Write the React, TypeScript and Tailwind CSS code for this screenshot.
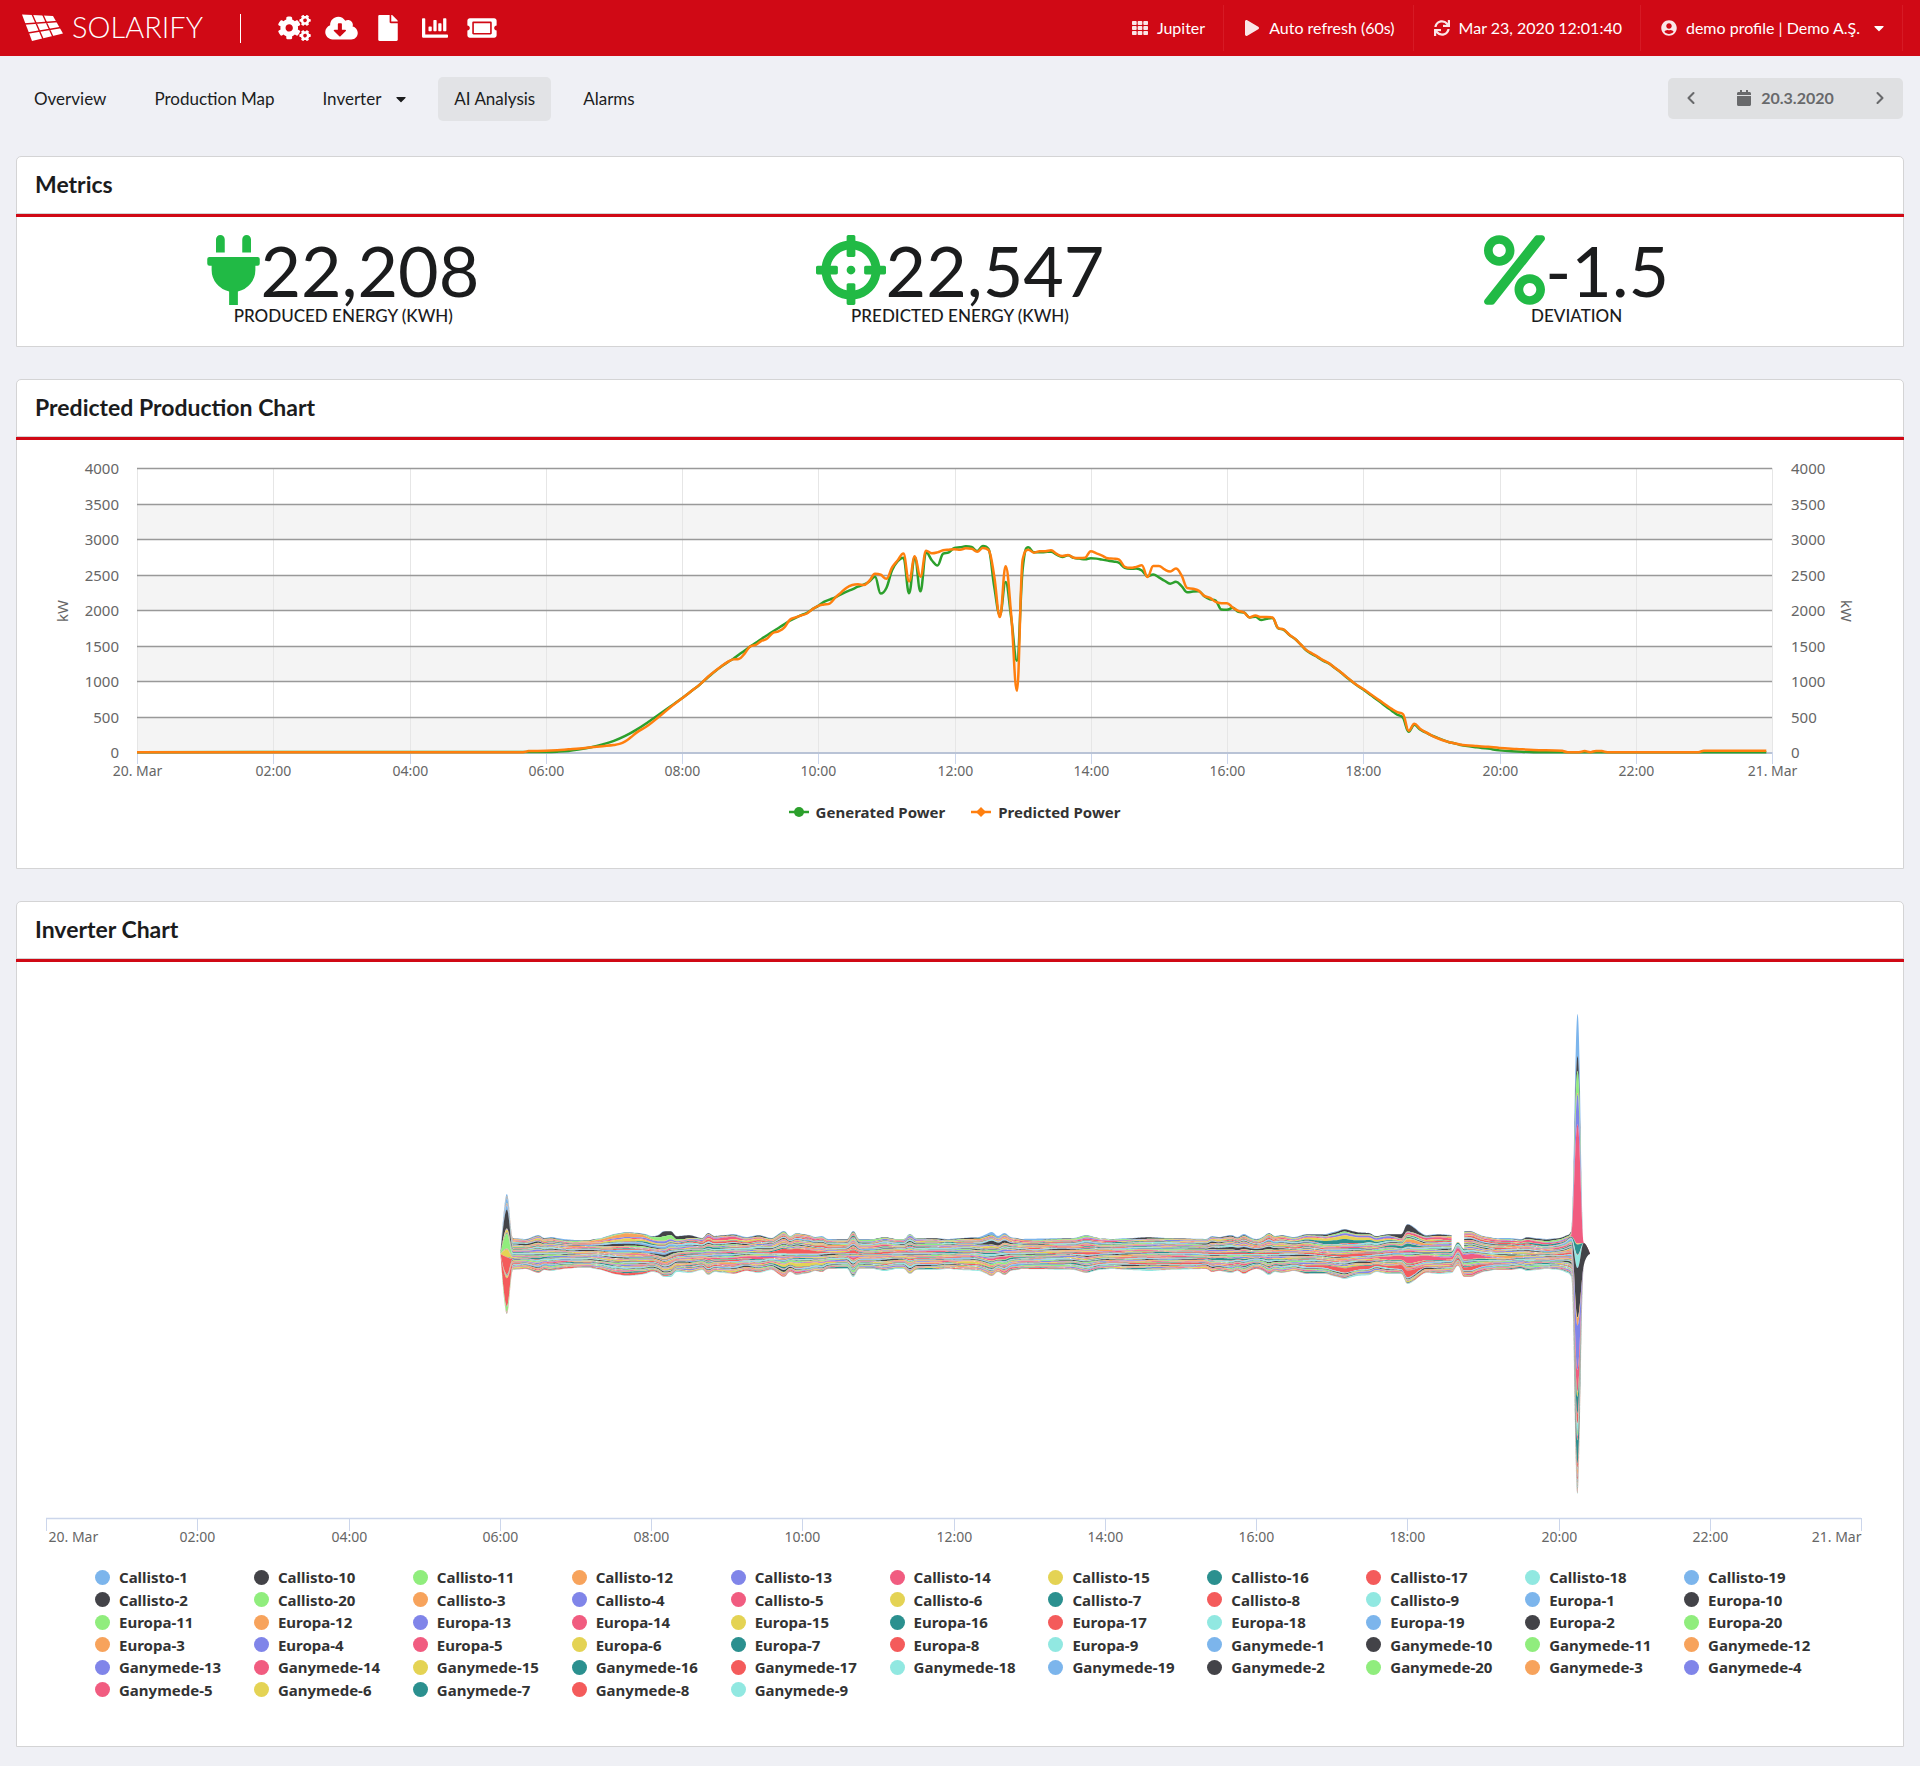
import type { ReactNode } from "react";
import type { IconType } from "react-icons";
import {
  FaCalendar,
  FaCaretDown,
  FaChartBar,
  FaCloudDownloadAlt,
  FaCogs,
  FaCrosshairs,
  FaFile,
  FaPercent,
  FaPlay,
  FaPlug,
  FaSync,
  FaTh,
  FaTicketAlt,
  FaUserCircle,
} from "react-icons/fa";
import { ChevronLeft, ChevronRight } from "lucide-react";

type Point = { x: number; y: number };

const HOUR_LABELS = [
  "20. Mar", "02:00", "04:00", "06:00", "08:00", "10:00", "12:00",
  "14:00", "16:00", "18:00", "20:00", "22:00", "21. Mar",
];

// one sample every five minutes, [sample index, kW]; gaps are interpolated
const GENERATED: [number, number][] = [
  [0, 5], [72, 8], [74, 12], [76, 22], [78, 45], [80, 75], [82, 115], [84, 165], [86, 235], [88, 325], [90, 430], [92, 543], [94, 655],
  [96, 768], [97, 829], [98, 894], [99, 955], [100, 1026], [101, 1096], [102, 1162], [103, 1222], [104, 1279], [105, 1326], [106, 1386], [107, 1443],
  [108, 1504], [109, 1555], [110, 1611], [111, 1663], [112, 1715], [113, 1766], [114, 1818], [115, 1869], [116, 1911], [117, 1949], [118, 1982], [119, 2033],
  [120, 2080], [121, 2136], [122, 2169], [123, 2202], [124, 2244], [125, 2282], [126, 2315], [127, 2352], [128, 2380], [129, 2427], [130, 2493], [131, 2254],
  [132, 2333], [133, 2586], [134, 2713], [135, 2764], [136, 2258], [137, 2774], [138, 2286], [139, 2839], [140, 2727], [141, 2652], [142, 2821], [143, 2839],
  [144, 2900], [145, 2910], [146, 2924], [147, 2914], [148, 2858], [149, 2928], [150, 2886], [151, 2352], [152, 1949], [153, 2418], [154, 1902], [155, 1302],
  [156, 2596], [157, 2910], [158, 2839], [159, 2839], [160, 2844], [161, 2849], [162, 2807], [163, 2774], [164, 2797], [165, 2760], [166, 2750], [167, 2741],
  [168, 2755], [169, 2750], [170, 2736], [171, 2722], [172, 2708], [173, 2689], [174, 2619], [175, 2605], [176, 2610], [177, 2582], [178, 2502], [179, 2525],
  [180, 2483], [181, 2436], [182, 2394], [183, 2422], [184, 2361], [185, 2272], [186, 2282], [187, 2286], [188, 2216], [189, 2174], [190, 2155], [191, 2029],
  [192, 2024], [193, 2052], [194, 1996], [195, 1986], [196, 1916], [197, 1925], [198, 1879], [199, 1897], [200, 1907], [201, 1762], [202, 1740], [203, 1665],
  [204, 1609], [205, 1529], [206, 1446], [207, 1396], [208, 1350], [209, 1299], [210, 1260], [211, 1198], [212, 1138], [213, 1072], [214, 1006], [215, 947],
  [216, 893], [217, 835], [218, 774], [219, 715], [220, 652], [221, 594], [222, 535], [223, 492], [224, 295], [225, 394], [226, 325], [227, 284],
  [228, 242], [229, 211], [230, 178], [231, 150], [232, 131], [233, 111], [234, 94], [236, 73], [238, 55], [240, 30], [243, 15], [246, 5], [287, 5],
];

const PREDICTED: [number, number][] = [
  [0, 5], [68, 5], [69, 20], [72, 24], [74, 32], [76, 45], [78, 58], [80, 74], [82, 90], [84, 106], [85, 122], [86, 158], [87, 215], [88, 282], [90, 383], [92, 510], [94, 646],
  [96, 768], [97, 829], [98, 894], [99, 955], [100, 1030], [101, 1102], [102, 1168], [103, 1228], [104, 1281], [105, 1321], [106, 1326], [107, 1400],
  [108, 1504], [109, 1527], [110, 1583], [111, 1616], [112, 1696], [113, 1719], [114, 1771], [115, 1883], [116, 1916], [117, 1944], [118, 1972], [119, 2033],
  [120, 2080], [121, 2099], [122, 2113], [123, 2197], [124, 2268], [125, 2338], [126, 2375], [127, 2385], [128, 2375], [129, 2436], [130, 2535], [131, 2521],
  [132, 2464], [133, 2624], [134, 2727], [135, 2821], [136, 2427], [137, 2783], [138, 2493], [139, 2863], [140, 2825], [141, 2839], [142, 2868], [143, 2877],
  [144, 2882], [145, 2877], [146, 2896], [147, 2891], [148, 2849], [149, 2900], [150, 2872], [151, 2502], [152, 1921], [153, 2643], [154, 1940], [155, 876],
  [156, 2736], [157, 2877], [158, 2835], [159, 2854], [160, 2854], [161, 2868], [162, 2816], [163, 2788], [164, 2802], [165, 2764], [166, 2760], [167, 2764],
  [168, 2854], [169, 2825], [170, 2793], [171, 2755], [172, 2750], [173, 2736], [174, 2633], [175, 2619], [176, 2633], [177, 2657], [178, 2488], [179, 2647],
  [180, 2647], [181, 2596], [182, 2568], [183, 2610], [184, 2511], [185, 2333], [186, 2324], [187, 2296], [188, 2221], [189, 2193], [190, 2136], [191, 2118],
  [192, 2118], [193, 2057], [194, 2010], [195, 1986], [196, 1916], [197, 1944], [198, 1921], [199, 1921], [200, 1916], [201, 1766], [202, 1745], [203, 1670],
  [204, 1612], [205, 1532], [206, 1452], [207, 1404], [208, 1357], [209, 1306], [210, 1264], [211, 1202], [212, 1142], [213, 1076], [214, 1010], [215, 950],
  [216, 900], [217, 844], [218, 788], [219, 732], [220, 675], [221, 619], [222, 572], [223, 544], [224, 308], [225, 408], [226, 338], [227, 288],
  [228, 244], [229, 206], [230, 174], [231, 150], [232, 131], [233, 114], [234, 103], [236, 91], [238, 80], [240, 65], [243, 50], [246, 36], [251, 26], [252, 5], [254, 5],
  [255, 20], [256, 5], [257, 22], [258, 20], [259, 5], [275, 5], [276, 26], [287, 26],
];

const SERIES_COLORS = [
  "#7cb5ec", "#434348", "#90ed7d", "#f7a35c", "#8085e9",
  "#f15c80", "#e4d354", "#2b908f", "#f45b5b", "#91e8e1",
];

const INVERTERS = ["Callisto", "Europa", "Ganymede"].flatMap((name) =>
  Array.from({ length: 20 }, (_, i) => `${name}-${i + 1}`).sort(),
);

// half height of the whole stream, [sample index, px]
const ENVELOPE: [number, number][] = [
  [72, 0], [73, 60], [74, 16], [76, 15], [78, 19], [79, 16], [80, 17], [82, 15], [84, 14], [86, 14], [88, 16], [90, 20], [92, 22], [94, 21], [95, 20], [96, 18],
  [97, 19], [98, 23], [99, 23], [100, 18], [102, 19], [104, 16], [105, 21], [106, 18], [109, 20], [111, 17], [113, 19], [115, 16], [117, 23], [118, 18], [119, 21],
  [121, 19], [122, 17], [123, 18], [124, 15], [127, 15], [128, 23], [129, 15], [131, 15], [133, 17], [135, 15], [136, 15], [137, 20], [138, 16], [141, 16], [143, 15],
  [145, 16], [148, 17], [150, 22], [151, 18], [152, 21], [153, 17], [155, 15], [163, 16], [165, 19], [167, 16], [169, 15], [172, 16], [175, 17], [178, 16], [184, 15],
  [185, 18], [186, 17], [188, 19], [189, 17], [190, 20], [191, 17], [192, 15], [193, 17], [194, 21], [195, 18], [196, 19], [198, 17], [200, 20], [203, 20], [206, 25],
  [208, 22], [210, 21], [211, 18], [213, 20], [215, 20], [216, 30], [217, 27], [218, 22], [219, 19], [221, 20], [223, 19], [224, 12], [225, 23], [226, 23], [228, 18],
  [230, 16], [232, 16], [234, 15], [235, 17], [238, 15], [240, 16], [241, 18], [242, 23], [243, 240], [244, 11], [245, 0],
];

// [series, centre sample, spread, strength]
const SWELLS: [number, number, number, number][] = [
  [3, 92, 4, 7], [6, 92, 5, 4], [11, 92, 5, 3], [20, 92, 5, 3], [58, 92, 5, 4], [1, 98, 1, 9], [2, 98, 2, 8], [1, 101, 2, 5], [4, 97, 3, 4], [10, 97, 4, 4],
  [21, 98, 2, 4], [5, 108, 4, 4], [8, 106, 5, 3], [28, 118, 3, 9], [35, 112, 3, 4], [28, 122, 2, 4], [46, 120, 4, 6], [51, 117, 2, 3], [28, 128, 1, 4],
  [35, 128, 1, 4], [0, 150, 2, 4], [11, 150, 2, 4], [35, 151, 2, 3], [46, 147, 3, 3], [28, 165, 2, 3], [5, 166, 3, 2], [48, 175, 8, 2], [21, 188, 6, 3],
  [28, 187, 5, 3], [37, 188, 5, 2], [6, 206, 6, 6], [7, 206, 5, 6], [1, 206, 5, 3], [4, 207, 4, 3], [48, 206, 5, 8], [28, 206, 6, 3], [1, 216, 2, 12],
  [17, 216, 2, 5], [13, 217, 2, 6], [35, 217, 4, 12], [48, 216, 2, 12], [5, 220, 5, 4], [35, 226, 3, 7], [48, 226, 2, 5], [1, 238, 4, 3], [5, 236, 5, 3],
  [33, 231, 3, 4], [8, 230, 4, 2], [7, 238, 4, 2],
];

const FIRST_SPIKE: Record<number, number> = { 0: 5, 10: 12, 20: 12, 21: 58, 26: 7, 32: 45, 36: 23, 38: 52, 46: 4, 48: 85, 52: 14 };
const LAST_SPIKE: Record<number, number> = {
  0: 125, 1: 45, 2: 65, 3: 5, 4: 90, 5: 355, 6: 3, 7: 30, 8: 2, 9: 36, 10: 2, 11: 147, 12: 2, 13: 22, 14: 133,
  15: 65, 16: 15, 17: 50, 18: 30, 19: 20, 27: 70, 28: 12, 22: 10, 25: 10, 33: 12, 38: 8,
};

function sampleAt(data: [number, number][], k: number) {
  const next = data.findIndex(([i]) => i >= k);
  const [i1, v1] = data[next];
  if (i1 === k) return v1;
  const [i0, v0] = data[next - 1];
  return v0 + ((v1 - v0) * (k - i0)) / (i1 - i0);
}

// Curve segments whose control points never overshoot a local extreme
function spline(points: Point[]) {
  const n = points.length;
  const left: Point[] = points.map((p) => ({ ...p }));
  const right: Point[] = points.map((p) => ({ ...p }));
  for (let i = 1; i < n - 1; i++) {
    const p = points[i];
    const a = points[i - 1];
    const b = points[i + 1];
    const lx = (1.5 * p.x + a.x) / 2.5;
    const rx = (1.5 * p.x + b.x) / 2.5;
    let ly = (1.5 * p.y + a.y) / 2.5;
    let ry = (1.5 * p.y + b.y) / 2.5;
    const correction = ((ry - ly) * (rx - p.x)) / (rx - lx) + p.y - ry;
    ly += correction;
    ry += correction;
    if (ly > a.y && ly > p.y) {
      ly = Math.max(a.y, p.y);
      ry = 2 * p.y - ly;
    } else if (ly < a.y && ly < p.y) {
      ly = Math.min(a.y, p.y);
      ry = 2 * p.y - ly;
    }
    if (ry > b.y && ry > p.y) {
      ry = Math.max(b.y, p.y);
      ly = 2 * p.y - ry;
    } else if (ry < b.y && ry < p.y) {
      ry = Math.min(b.y, p.y);
      ly = 2 * p.y - ry;
    }
    left[i] = { x: lx, y: ly };
    right[i] = { x: rx, y: ry };
  }
  return points
    .slice(1)
    .map((p, i) => {
      const c = [right[i], left[i + 1], p];
      return "C" + c.map((q) => `${q.x.toFixed(2)} ${q.y.toFixed(2)}`).join(" ");
    })
    .join("");
}

function start(p: Point) {
  return `${p.x.toFixed(2)} ${p.y.toFixed(2)}`;
}

const PLOT_W = 1635;
const PLOT_H = 284;

function powerPath(data: [number, number][]) {
  const points = data.map(([k, v]) => ({ x: (k * PLOT_W) / 288, y: PLOT_H + 0.5 - (v * (PLOT_H - 2)) / 4000 }));
  return "M" + start(points[0]) + spline(points);
}

const STREAM_W = 1815;
const NULL_SAMPLE = 224;
const NULL_SERIES = 25;

function streamWeight(s: number, k: number) {
  if (k === 73) return FIRST_SPIKE[s] ?? 1;
  if (k === 243) return LAST_SPIKE[s] ?? 2;
  if (k >= 244) return s === 11 ? 1 : 0;
  if (k === NULL_SAMPLE && s < NULL_SERIES) return 0;
  const wave = Math.sin(k * 0.17 + s * 2.4) + Math.sin(k * 0.41 + s * 5.3) + Math.sin(k * 0.93 + s * 9.1);
  let w = Math.exp(wave * 0.42);
  for (const [id, centre, spread, strength] of SWELLS) {
    if (id === s) w += strength * Math.exp(-(((k - centre) / spread) ** 2));
  }
  return w;
}

function buildStream() {
  const edges: number[][] = [];
  for (let k = 72; k <= 245; k++) {
    const half = sampleAt(ENVELOPE, k);
    const weights = INVERTERS.map((_, s) => streamWeight(s, k));
    const total = weights.reduce((a, b) => a + b, 0);
    let y = -half;
    edges.push([y, ...weights.map((w) => (y += (w * 2 * half) / total))]);
  }
  const area = (s: number, from: number, to: number) => {
    const top: Point[] = [];
    const bottom: Point[] = [];
    for (let k = from; k <= to; k++) {
      const x = (k * (STREAM_W - 1)) / 288;
      top.push({ x, y: edges[k - 72][s] });
      bottom.unshift({ x, y: edges[k - 72][s + 1] });
    }
    return "M" + start(top[0]) + spline(top) + "L" + start(bottom[0]) + spline(bottom) + "Z";
  };
  return INVERTERS.map((_, s) =>
    s < NULL_SERIES ? area(s, 72, NULL_SAMPLE - 1) + area(s, NULL_SAMPLE + 1, 245) : area(s, 72, 245),
  );
}

const STREAM = buildStream();

function Card({ title, children }: { title: string; children: ReactNode }) {
  return (
    <section className="rounded-t-[5px] border border-[#d4d4d5] bg-white">
      <h2 className="flex h-[57px] items-center border-b border-[#d4d4d5] px-[18px] pb-[2px] text-[23px] font-bold">{title}</h2>
      <div className="-mx-px h-[3px] bg-[#d00915]" />
      {children}
    </section>
  );
}

function Logo() {
  return (
    <a href="#home" className="flex items-center" aria-label="Solarify">
      <svg width="42" height="28" viewBox="0 0 42 28" aria-hidden="true">
        <path d="M0 0.5 31 2 41 19.5 10 27Z" fill="#fff" />
        <path
          d="M10 0 21 25M20.5 0 31 23M2.5 10 36 7.5M6 19 39 13.5"
          stroke="#d00915"
          strokeWidth="1.4"
          fill="none"
        />
      </svg>
      <span className="ml-2 pb-[3px] text-[29px] leading-7 font-light">SOLARIFY</span>
    </a>
  );
}

const TOOLS: { label: string; icon: IconType; size: string }[] = [
  { label: "Settings", icon: FaCogs, size: "h-[26px] w-[33px]" },
  { label: "Downloads", icon: FaCloudDownloadAlt, size: "h-[26px] w-[33px]" },
  { label: "Reports", icon: FaFile, size: "h-[26px] w-5" },
  { label: "Charts", icon: FaChartBar, size: "size-[26px]" },
  { label: "Tickets", icon: FaTicketAlt, size: "h-[26px] w-[30px]" },
];

const STATUS: { label: string; icon: IconType; caret?: boolean }[] = [
  { label: "Jupiter", icon: FaTh },
  { label: "Auto refresh (60s)", icon: FaPlay },
  { label: "Mar 23, 2020 12:01:40", icon: FaSync },
  { label: "demo profile | Demo A.Ş.", icon: FaUserCircle, caret: true },
];

function TopBar() {
  return (
    <header className="flex h-14 items-center bg-[#d00915] pr-[17px] pl-[22px] text-white">
      <Logo />
      <div className="ml-[37px] h-[29px] w-px bg-white" />
      <nav className="ml-[30px] flex items-center">
        {TOOLS.map(({ label, icon: Icon, size }) => (
          <a key={label} href={`#${label.toLowerCase()}`} aria-label={label} className="flex w-[47px] justify-center">
            <Icon className={size} />
          </a>
        ))}
      </nav>
      <div className="ml-auto flex h-[46px]">
        {STATUS.map(({ label, icon: Icon, caret }) => (
          <button key={label} type="button" className="flex items-center border-r border-[#d61a25] px-[18px] text-base">
            <span className="mr-[7px] flex w-5 justify-center">
              <Icon className="size-4 opacity-90" />
            </span>
            {label}
            {caret && <FaCaretDown className="ml-[14px] h-4 w-[10px]" />}
          </button>
        ))}
      </div>
    </header>
  );
}

const TABS = ["Overview", "Production Map", "Inverter", "AI Analysis", "Alarms"];

function SubNav() {
  return (
    <div className="flex justify-between pt-[21px] pr-[17px] pl-[18px]">
      <nav className="flex gap-4">
        {TABS.map((tab) => (
          <a
            key={tab}
            href={`#${tab.toLowerCase().replace(" ", "-")}`}
            className={`flex h-11 items-center rounded-[5px] px-4 text-[17px] ${tab === "AI Analysis" ? "bg-[#e2e3e6]" : ""}`}
          >
            {tab}
            {tab === "Inverter" && <FaCaretDown className="ml-[15px] h-4 w-[10px]" />}
          </a>
        ))}
      </nav>
      <div className="mt-px flex h-[41px] w-[235px] items-center justify-between rounded-[5px] bg-[#dfe0e2] px-[13px] pb-[2px] text-[#68696b]">
        <button type="button" aria-label="Previous day">
          <ChevronLeft size={20} strokeWidth={2.5} />
        </button>
        <button type="button" className="flex items-center gap-[10px] text-base font-bold">
          <FaCalendar className="h-4 w-[14px]" />
          20.3.2020
        </button>
        <button type="button" aria-label="Next day">
          <ChevronRight size={20} strokeWidth={2.5} />
        </button>
      </div>
    </div>
  );
}

const METRICS: { label: string; value: string; icon: IconType; size: string }[] = [
  { label: "PRODUCED ENERGY (KWH)", value: "22,208", icon: FaPlug, size: "h-[70px] w-[53px]" },
  { label: "PREDICTED ENERGY (KWH)", value: "22,547", icon: FaCrosshairs, size: "size-[70px]" },
  { label: "DEVIATION", value: "-1.5", icon: FaPercent, size: "h-[70px] w-[61px]" },
];

function PowerChart() {
  const ticks = [4000, 3500, 3000, 2500, 2000, 1500, 1000, 500, 0];
  const tickY = (v: number) => Math.round(PLOT_H - (v * PLOT_H) / 4000);
  return (
    <svg viewBox="0 0 1886 344" className="block w-full font-['Noto_Sans',sans-serif] text-[14px]" role="img" aria-label="Predicted production">
      <g transform="translate(120 28)">
        {[3500, 2500, 1500, 500].map((v) => (
          <rect key={v} x="0" y={tickY(v)} width={PLOT_W} height="35" fill="#f4f4f4" />
        ))}
        {HOUR_LABELS.map((label, i) => {
          const x = Math.round((i * PLOT_W) / 12) + 0.5;
          return (
            <g key={label}>
              <path d={`M${x} 0V${PLOT_H}`} stroke="#e6e6e6" />
              <path d={`M${x} ${PLOT_H}v12`} stroke="#ccd6eb" />
              <text x={x} y="308" textAnchor="middle" fill="#666">{label}</text>
            </g>
          );
        })}
        {ticks.map((v) => (
          <g key={v} fill="#666" className="text-[15px]">
            {v > 0 && <path d={`M0 ${tickY(v) + 0.5}H${PLOT_W}`} stroke="#999" strokeWidth="1.5" />}
            <text x="-18" y={tickY(v) + 6} textAnchor="end">{v}</text>
            <text x={PLOT_W + 19} y={tickY(v) + 6}>{v}</text>
          </g>
        ))}
        <path d={`M0 ${PLOT_H + 1}H${PLOT_W}`} stroke="#b9c3d6" strokeWidth="2" />
        <g fill="#666" textAnchor="middle" className="text-[15px]">
          <text transform="translate(-69 143) rotate(-90)">kW</text>
          <text transform="translate(1704 143) rotate(90)">kW</text>
        </g>
        <path d={powerPath(GENERATED)} fill="none" stroke="#2ca02c" strokeWidth="2.5" strokeLinejoin="round" />
        <path d={powerPath(PREDICTED)} fill="none" stroke="#ff7f0e" strokeWidth="2.5" strokeLinejoin="round" />
      </g>
    </svg>
  );
}

function PowerLegend() {
  return (
    <div className="flex justify-center gap-[26px] pt-[18px] pr-[11px] pb-[46px] font-['Noto_Sans',sans-serif] text-[15px] leading-5 font-bold text-[#333]">
      <button type="button" className="flex items-center gap-[7px]">
        <svg width="20" height="12" viewBox="0 0 20 12" aria-hidden="true">
          <path d="M0 6H20" stroke="#2ca02c" strokeWidth="2.5" />
          <circle cx="10" cy="6" r="5" fill="#2ca02c" />
        </svg>
        Generated Power
      </button>
      <button type="button" className="flex items-center gap-[7px]">
        <svg width="20" height="12" viewBox="0 0 20 12" aria-hidden="true">
          <path d="M0 6H20" stroke="#ff7f0e" strokeWidth="2.5" />
          <path d="M10 1 15 6 10 11 5 6Z" fill="#ff7f0e" />
        </svg>
        Predicted Power
      </button>
    </div>
  );
}

function InverterChart() {
  return (
    <svg viewBox="0 0 1886 587" className="block w-full font-['Noto_Sans',sans-serif] text-[14px]" role="img" aria-label="Inverter output">
      <g transform="translate(30 292)">
        {STREAM.map((d, s) => (
          <path key={INVERTERS[s]} d={d} fill={SERIES_COLORS[s % 10]} />
        ))}
      </g>
      <g transform="translate(29 556)">
        <path d={`M0 .5H${STREAM_W}`} stroke="#ccd6eb" strokeWidth="1.5" />
        {HOUR_LABELS.map((label, i) => {
          const x = Math.round((i * STREAM_W) / 12) + 0.5;
          const edge = i === 0 ? "start" : i === 12 ? "end" : "middle";
          return (
            <g key={label}>
              <path d={`M${x} 0v13`} stroke="#ccd6eb" />
              <text x={i === 0 ? x + 2 : x} y="24" textAnchor={edge} fill="#666">{label}</text>
            </g>
          );
        })}
      </g>
    </svg>
  );
}

function InverterLegend() {
  return (
    <div className="grid h-[197px] grid-cols-11 grid-rows-6 pt-[17px] pr-[60px] pb-[45px] pl-[78px] font-['Noto_Sans',sans-serif] text-[15px] leading-5 font-bold text-[#333]">
      {INVERTERS.map((name, s) => (
        <button key={name} type="button" className="flex items-center gap-[9px]">
          <span className="size-[15px] rounded-full" style={{ backgroundColor: SERIES_COLORS[s % 10] }} />
          {name}
        </button>
      ))}
    </div>
  );
}

export default function App() {
  return (
    <div className="min-h-screen bg-[#eff0f5] pb-[17px] font-[Lato,sans-serif] text-[#1b1c1d]">
      <TopBar />
      <SubNav />
      <main className="flex flex-col gap-8 px-4 pt-[35px]">
        <Card title="Metrics">
          <div className="grid grid-cols-3 px-[18px] pt-[18px] pb-[19px]">
            {METRICS.map(({ label, value, icon: Icon, size }) => (
              <div key={label} className="flex flex-col items-center">
                <div className="flex items-center text-[70px] leading-[70px]">
                  <Icon className={`${size} text-[#21ba45]`} />
                  {value}
                </div>
                <div className="text-[17px] leading-[22px] font-medium">{label}</div>
              </div>
            ))}
          </div>
        </Card>
        <Card title="Predicted Production Chart">
          <PowerChart />
          <PowerLegend />
        </Card>
        <Card title="Inverter Chart">
          <InverterChart />
          <InverterLegend />
        </Card>
      </main>
    </div>
  );
}
